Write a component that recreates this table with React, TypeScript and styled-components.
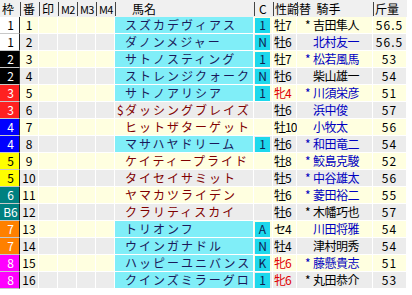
import React from 'react';
import styled, { createGlobalStyle } from 'styled-components';

const Global = createGlobalStyle`
  html, body { margin: 0; padding: 0; background: #ffffff; }
  body { font-family: "Noto Sans CJK JP", "Noto Sans", sans-serif; }
  #root { width: 412px; height: 295px; overflow: hidden; }
`;

const COLS = '20px 19px 19px 19px 19px 19px 139px 19px 24px 76px 34px';

type Horse = {
  waku: number;
  wakuLabel?: string;
  ban: number;
  mark?: string;
  name: string;
  cyan: boolean;
  c?: string;
  sex: string;
  mare?: boolean;
  jmark?: string;
  jockey: string;
  jblue: boolean;
  kin: string;
};

const horses: Horse[] = [
  { waku: 1, ban: 1, name: 'スズカデヴィアス', cyan: true, c: '1', sex: '牡7', jmark: '*', jockey: '吉田隼人', jblue: false, kin: '56.5' },
  { waku: 1, ban: 2, name: 'ダノンメジャー', cyan: true, c: 'N', sex: '牡6', jockey: '北村友一', jblue: true, kin: '56.5' },
  { waku: 2, ban: 3, name: 'サトノスティング', cyan: true, c: '1', sex: '牡7', jmark: '*', jockey: '松若風馬', jblue: true, kin: '53' },
  { waku: 2, ban: 4, name: 'ストレンジクォーク', cyan: true, c: 'N', sex: '牡6', jockey: '柴山雄一', jblue: false, kin: '54' },
  { waku: 3, ban: 5, name: 'サトノアリシア', cyan: true, c: '1', sex: '牝4', mare: true, jmark: '*', jockey: '川須栄彦', jblue: true, kin: '51' },
  { waku: 3, ban: 6, mark: '$', name: 'ダッシングブレイズ', cyan: false, sex: '牡6', jockey: '浜中俊', jblue: true, kin: '57' },
  { waku: 4, ban: 7, name: 'ヒットザターゲット', cyan: false, sex: '牡10', jockey: '小牧太', jblue: true, kin: '56' },
  { waku: 4, ban: 8, name: 'マサハヤドリーム', cyan: true, c: '1', sex: '牡6', jmark: '*', jockey: '和田竜二', jblue: true, kin: '54' },
  { waku: 5, ban: 9, name: 'ケイティープライド', cyan: false, sex: '牡8', jmark: '*', jockey: '鮫島克駿', jblue: true, kin: '52' },
  { waku: 5, ban: 10, name: 'タイセイサミット', cyan: false, sex: '牡5', jmark: '*', jockey: '中谷雄太', jblue: true, kin: '56' },
  { waku: 6, ban: 11, name: 'ヤマカツライデン', cyan: false, sex: '牡6', jmark: '*', jockey: '菱田裕二', jblue: true, kin: '55' },
  { waku: 6, wakuLabel: 'B6', ban: 12, name: 'クラリティスカイ', cyan: false, sex: '牡6', jmark: '*', jockey: '木幡巧也', jblue: false, kin: '57' },
  { waku: 7, ban: 13, name: 'トリオンフ', cyan: true, c: 'A', sex: 'セ4', jockey: '川田将雅', jblue: true, kin: '54' },
  { waku: 7, ban: 14, name: 'ウインガナドル', cyan: true, c: 'N', sex: '牡4', jockey: '津村明秀', jblue: false, kin: '54' },
  { waku: 8, ban: 15, name: 'ハッピーユニバンス', cyan: true, c: 'K', sex: '牝6', mare: true, jmark: '*', jockey: '藤懸貴志', jblue: true, kin: '51' },
  { waku: 8, ban: 16, name: 'クインズミラーグロ', cyan: true, c: '1', sex: '牝6', mare: true, jmark: '*', jockey: '丸田恭介', jblue: false, kin: '53' },
];

const WAKU: Record<number, { bg: string; fg: string }> = {
  1: { bg: '#ffffff', fg: '#000000' },
  2: { bg: '#000000', fg: '#ffffff' },
  3: { bg: '#ff2020', fg: '#ffffff' },
  4: { bg: '#0000ff', fg: '#ffffff' },
  5: { bg: '#ffff00', fg: '#000000' },
  6: { bg: '#008080', fg: '#ffffff' },
  7: { bg: '#ff8000', fg: '#ffffff' },
  8: { bg: '#ff00ff', fg: '#ffffff' },
};

const Table = styled.div`
  width: 407px;
  display: flex;
  flex-direction: column;
`;

const HeaderRow = styled.div`
  display: grid;
  grid-template-columns: ${COLS};
  height: 17px;
  background: #f0f0f0;
`;

const HeadCell = styled.div<{ $sep?: boolean; $pl?: number; $narrow?: boolean }>`
  box-sizing: border-box;
  height: 14px;
  margin-top: 2px;
  padding-left: ${(p) => p.$pl ?? 2}px;
  border-left: ${(p) => (p.$sep ? '1px solid #444' : 'none')};
  font-size: ${(p) => (p.$narrow ? 11 : 12)}px;
  letter-spacing: ${(p) => (p.$narrow ? '-0.8px' : '0')};
  line-height: 14px;
  color: #000;
  white-space: nowrap;
`;

const Row = styled.div`
  display: grid;
  grid-template-columns: ${COLS};
  height: 17px;
  background: #ffffff;
`;

const Cell = styled.div<{ $bg: string; $align?: string; $color?: string }>`
  box-sizing: border-box;
  height: 17px;
  border-right: 1px solid #ffffff;
  border-bottom: 1px solid #ffffff;
  background: ${(p) => p.$bg};
  color: ${(p) => p.$color ?? '#000'};
  display: flex;
  align-items: center;
  justify-content: ${(p) => p.$align ?? 'flex-start'};
  font-size: 12px;
  line-height: 14px;
  white-space: nowrap;
`;

const WakuCell = styled(Cell)`
  border-right: 1px solid #222222;
  border-bottom: 1px solid #c8c8c8;
  justify-content: center;
  padding-left: 2px;
`;

const NameCell = styled(Cell)`
  padding-left: 2px;
  letter-spacing: 2px;
`;

const MarkSlot = styled.span`
  display: inline-block;
  width: 8px;
  letter-spacing: 0;
`;

const Badge = styled.span`
  display: flex;
  align-items: center;
  justify-content: center;
  width: 15px;
  height: 15px;
  margin-left: 1px;
  background: #1ed8ec;
  color: #102050;
  font-size: 12px;
`;

const SexCell = styled(Cell)`
  padding-left: 1px;
  letter-spacing: -1px;
`;

const JockeyCell = styled(Cell)`
  padding-left: 8px;
  letter-spacing: -0.5px;
`;

const JMark = styled.span`
  display: inline-block;
  width: 8px;
`;

const KinCell = styled(Cell)`
  justify-content: center;
  letter-spacing: 1px;
`;

export default function App() {
  return (
    <>
      <Global />
      <Table>
        <HeaderRow>
          <HeadCell>枠</HeadCell>
          <HeadCell $sep>番</HeadCell>
          <HeadCell $sep>印</HeadCell>
          <HeadCell $sep $narrow>M2</HeadCell>
          <HeadCell $sep $narrow>M3</HeadCell>
          <HeadCell $sep $narrow>M4</HeadCell>
          <HeadCell $sep $pl={16}>馬名</HeadCell>
          <HeadCell $sep $pl={4}>C</HeadCell>
          <HeadCell $sep $pl={1}>性齢</HeadCell>
          <HeadCell $sep $pl={1}>替&nbsp;&nbsp;騎手</HeadCell>
          <HeadCell $sep $pl={1}>斤量</HeadCell>
        </HeaderRow>
        {horses.map((h, i) => {
          const bg = i % 2 === 0 ? '#ffffe0' : '#ececec';
          const w = WAKU[h.waku];
          return (
            <Row key={h.ban}>
              <WakuCell $bg={w.bg} $color={w.fg}>{h.wakuLabel ?? h.waku}</WakuCell>
              <Cell $bg={bg} $align="center">{h.ban}</Cell>
              <Cell $bg={bg} />
              <Cell $bg={bg} />
              <Cell $bg={bg} />
              <Cell $bg={bg} />
              <NameCell $bg={h.cyan ? '#80eef8' : bg} $color={h.cyan ? '#1a1a5a' : '#800000'}>
                <MarkSlot>{h.mark ?? ''}</MarkSlot>
                {h.name}
              </NameCell>
              <Cell $bg={bg}>{h.c ? <Badge>{h.c}</Badge> : null}</Cell>
              <SexCell $bg={bg} $color={h.mare ? '#e00000' : '#000'}>{h.sex}</SexCell>
              <JockeyCell $bg={bg} $color={h.jblue ? '#0000c0' : '#000'}>
                <JMark>{h.jmark ?? ''}</JMark>
                {h.jockey}
              </JockeyCell>
              <KinCell $bg={bg}>{h.kin}</KinCell>
            </Row>
          );
        })}
      </Table>
    </>
  );
}
